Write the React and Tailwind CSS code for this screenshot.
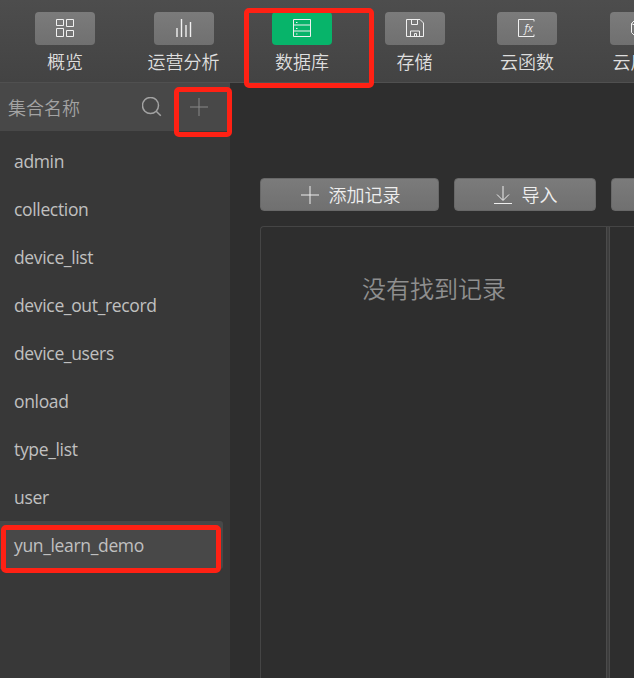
import React from "react";

const collections = [
  "admin",
  "collection",
  "device_list",
  "device_out_record",
  "device_users",
  "onload",
  "type_list",
  "user",
  "yun_learn_demo",
];

function Glyph({ children, size = 18, className = "" }) {
  return (
    <svg
      width={size}
      height={size}
      viewBox={`0 0 ${size} ${size}`}
      fill="none"
      stroke="currentColor"
      strokeWidth="1"
      className={`shrink-0 ${className}`}
    >
      {children}
    </svg>
  );
}

const GridIcon = () => (
  <Glyph>
    <path d="M.5.5h7v6h-7zM10.500.5h7v7h-7zM.5 9.500h7v8h-7zM10.500 11.500h7v6h-7z" />
  </Glyph>
);

const BarsIcon = () => (
  <Glyph className="stroke-[1.4]">
    <path d="M2 9v9M6.500 0v18M11 6v12M15.500 3v15" />
  </Glyph>
);

const DatabaseIcon = () => (
  <Glyph>
    <path d="M.5.5h17v17H.5zM.5 6h17M.5 12h17" />
    <path d="M3 3.500h1.500M3 9.500h1.500M3 15h1.500" />
  </Glyph>
);

const DiskIcon = () => (
  <Glyph>
    <path d="M.5.5h13.500l3.500 3.500v13.500H.5zM5.500.5v5h6v-5M4.500 17.500v-5.500h9v5.500M8.500 17v-2.500h2V17" />
  </Glyph>
);

const FunctionIcon = () => (
  <Glyph>
    <path d="M16 2.500v-2H.5v17H16v-2" />
    <text
      x="6.500"
      y="12.500"
      fill="currentColor"
      stroke="none"
      className="font-['Open_Sans',sans-serif] text-[10.5px] font-medium italic"
    >
      fx
    </text>
  </Glyph>
);

const BoxIcon = () => (
  <Glyph>
    <path d="M.5 4.500 3.500 1.500h11l3 3v9l-3 3h-11l-3-3zM.5 4.500l4 2h9l4-2" />
  </Glyph>
);

const navItems = [
  { label: "概览", icon: <GridIcon />, width: "w-[60px]" },
  { label: "运营分析", icon: <BarsIcon />, width: "w-[72px]" },
  { label: "数据库", icon: <DatabaseIcon />, width: "w-[60px]", active: true },
  { label: "存储", icon: <DiskIcon />, width: "w-[60px]" },
  { label: "云函数", icon: <FunctionIcon />, width: "w-[60px]" },
  { label: "云后台", icon: <BoxIcon />, width: "w-[60px]" },
];

function NavItem({ label, icon, width, active }) {
  return (
    <div className={`flex shrink-0 flex-col items-center ${width}`}>
      <div
        className={`flex h-[33px] w-[60px] items-center justify-center rounded-[4px] pb-[2px] text-[#f0f0f0] ${
          active ? "bg-[#07b46a]" : "bg-linear-to-b from-[#7b7b7b] to-[#707070]"
        }`}
      >
        {icon}
      </div>
      <span className="mt-[3px] text-[18px] leading-[26px] whitespace-nowrap text-[#dedede]">{label}</span>
    </div>
  );
}

function ToolButton({ className, children }) {
  return (
    <div
      className={`flex h-[33px] shrink-0 items-center justify-center gap-[10px] rounded-[4px] border border-[#686868] bg-linear-to-b from-[#7b7b7b] to-[#707070] text-[18px] leading-[26px] text-[#eeeeee] ${className}`}
    >
      {children}
    </div>
  );
}

function Highlight({ className }) {
  return <div className={`pointer-events-none absolute rounded-[5px] border-[5px] border-[#ff2114] ${className}`} />;
}

export default function App() {
  return (
    <div className="relative flex h-[678px] w-[634px] flex-col overflow-hidden bg-[#2e2e2e] font-['Noto_Sans_CJK_SC',sans-serif] font-[350]">
      <header className="flex h-[83px] shrink-0 gap-[52.5px] overflow-hidden border-b border-[#505050] bg-linear-to-b from-[#4d4d4d] to-[#434343] pt-[12px] pl-[35px]">
        {navItems.map((item) => (
          <NavItem key={item.label} {...item} />
        ))}
      </header>

      <div className="flex min-h-0 flex-1">
        <aside className="w-[230px] shrink-0 bg-[#383838]">
          <div className="flex h-[48px] items-center bg-[#484848] pl-[8px] text-[#a3a3a3]">
            <span className="w-[134px] pb-px text-[18px] leading-[26px]">集合名称</span>
            <Glyph size={20} className="stroke-[1.5]">
              <circle cx="8.500" cy="8.500" r="8" />
              <path d="m14.200 14.200 4.600 4.600" />
            </Glyph>
            <Glyph className="ml-[28px] text-[#888888]">
              <path d="M9 0v18M0 9h18" />
            </Glyph>
          </div>
          <ul className="pt-[6px] font-['Open_Sans',sans-serif] text-[17.5px] font-normal tracking-[-0.34px] text-[#c0c0c0]">
            {collections.map((name) => (
              <li
                key={name}
                className={`flex h-[48px] w-[223px] items-center rounded-r-[3px] pt-px pl-[14px] ${
                  name === "yun_learn_demo" ? "bg-[#484848]" : ""
                }`}
              >
                {name}
              </li>
            ))}
          </ul>
        </aside>

        <main className="flex min-w-0 flex-1 flex-col overflow-hidden pt-[95px] pl-[30px]">
          <div className="flex gap-[15px]">
            <ToolButton className="w-[179px] pl-[2px]">
              <Glyph>
                <path d="M9 0v18M0 9h18" />
              </Glyph>
              <span className="pb-[2px]">添加记录</span>
            </ToolButton>
            <ToolButton className="w-[142px] pl-px">
              <Glyph>
                <path d="M9 0v14M3 8.500l6 6 6-6M0 17.500h18" />
              </Glyph>
              <span className="pb-[2px]">导入</span>
            </ToolButton>
            <ToolButton className="w-[142px]" />
          </div>
          <div className="mt-[15px] flex w-[400px] flex-1 rounded-tl-[4px] border-t border-l border-[#454545]">
            <section className="flex w-[345px] shrink-0 justify-center pt-[43px] pl-px">
              <p className="text-[24px] leading-[36px] text-[#8f8f8f]">没有找到记录</p>
            </section>
            <div className="w-[4px] shrink-0 border-x border-[#4b4b4b] bg-[#3d3d3d]" />
          </div>
        </main>
      </div>

      <Highlight className="top-[8px] left-[244px] h-[80px] w-[130px]" />
      <Highlight className="top-[87px] left-[174px] h-[50px] w-[58px]" />
      <Highlight className="top-[525px] left-[1px] h-[48px] w-[220px]" />
    </div>
  );
}
